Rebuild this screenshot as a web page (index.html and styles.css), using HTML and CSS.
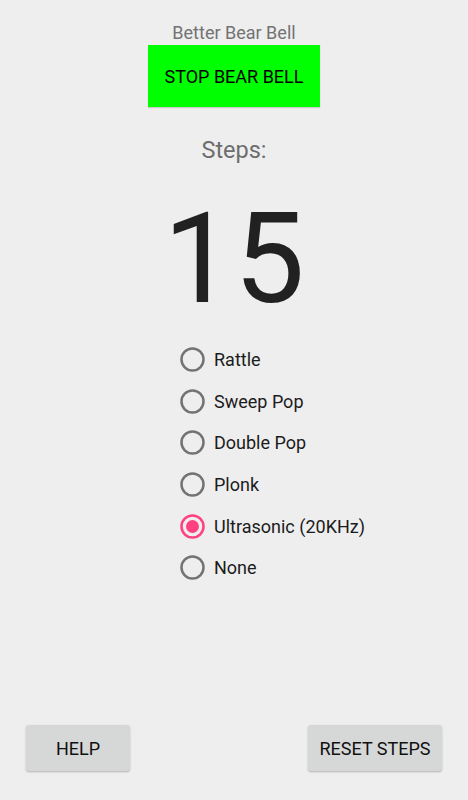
FILE: index.html
```html
<!DOCTYPE html>
<html lang="en">
<head>
    <meta charset="UTF-8">
    <meta name="viewport" content="width=device-width, initial-scale=1.0">
    <title>Better Bear Bell</title>
    <link rel="stylesheet" href="styles.css">
</head>
<body class="app">
    <div class="top">
        <div class="app-title">Better Bear Bell</div>
        <button class="stop-btn">STOP BEAR BELL</button>
        <div class="steps-label">Steps:</div>
        <div class="steps-count">15</div>
    </div>

    <div class="sound-list">
        <label class="sound">
            <svg class="radio" viewBox="0 0 25 25"><circle cx="12.5" cy="12.5" r="11" /></svg>
            <span>Rattle</span>
        </label>
        <label class="sound">
            <svg class="radio" viewBox="0 0 25 25"><circle cx="12.5" cy="12.5" r="11" /></svg>
            <span>Sweep Pop</span>
        </label>
        <label class="sound">
            <svg class="radio" viewBox="0 0 25 25"><circle cx="12.5" cy="12.5" r="11" /></svg>
            <span>Double Pop</span>
        </label>
        <label class="sound">
            <svg class="radio" viewBox="0 0 25 25"><circle cx="12.5" cy="12.5" r="11" /></svg>
            <span>Plonk</span>
        </label>
        <label class="sound checked">
            <svg class="radio" viewBox="0 0 25 25"><circle cx="12.5" cy="12.5" r="11" /><circle class="dot" cx="12.5" cy="12.5" r="6.5" /></svg>
            <span>Ultrasonic (20KHz)</span>
        </label>
        <label class="sound">
            <svg class="radio" viewBox="0 0 25 25"><circle cx="12.5" cy="12.5" r="11" /></svg>
            <span>None</span>
        </label>
    </div>

    <div class="bottom-bar">
        <button class="flat-btn help-btn">HELP</button>
        <button class="flat-btn reset-btn">RESET STEPS</button>
    </div>
</body>
</html>
```

FILE: styles.css
```css
.app{
    margin: 0;
    width: 468px;
    height: 800px;
    background-color: #eeeeee;
    font-family: Roboto, "Liberation Sans", sans-serif;
    display: flex;
    flex-direction: column;
}
.top{
    display: flex;
    flex-direction: column;
    align-items: center;
    padding-top: 23px;
}
.app-title{
    font-size: 18px;
    line-height: 20px;
    color: #737373;
}
.stop-btn{
    margin-top: 2px;
    width: 172px;
    height: 62px;
    border: none;
    background-color: #00ff00;
    font-family: inherit;
    font-size: 18px;
    color: #000000;
    box-shadow: 0 1px 1px rgba(0,0,0,0.15);
}
.steps-label{
    margin-top: 30px;
    font-size: 23.5px;
    line-height: 26px;
    color: #6d6d6d;
}
.steps-count{
    margin-top: 33px;
    font-size: 126px;
    line-height: 126px;
    color: #212121;
}
.sound-list{
    display: flex;
    flex-direction: column;
    padding-left: 180px;
    margin-top: 17px;
}
.sound{
    display: flex;
    align-items: center;
    height: 41.6px;
    font-size: 18px;
    color: #1c1c1c;
}
.radio{
    width: 25px;
    height: 25px;
    margin-right: 9px;
}
.radio circle{
    fill: none;
    stroke: #737373;
    stroke-width: 2.5;
}
.checked .radio circle{
    stroke: #ff4081;
}
.checked .radio .dot{
    fill: #ff4081;
    stroke: none;
}
.bottom-bar{
    margin-top: auto;
    display: flex;
    justify-content: space-between;
    padding: 0 26px 29px 26px;
}
.flat-btn{
    height: 46px;
    border: none;
    border-radius: 3px;
    background-color: #d6d7d7;
    font-family: inherit;
    font-size: 18px;
    color: #111111;
    box-shadow: 0 1px 2px rgba(0,0,0,0.25);
}
.help-btn{
    width: 104px;
}
.reset-btn{
    width: 134px;
}
```
